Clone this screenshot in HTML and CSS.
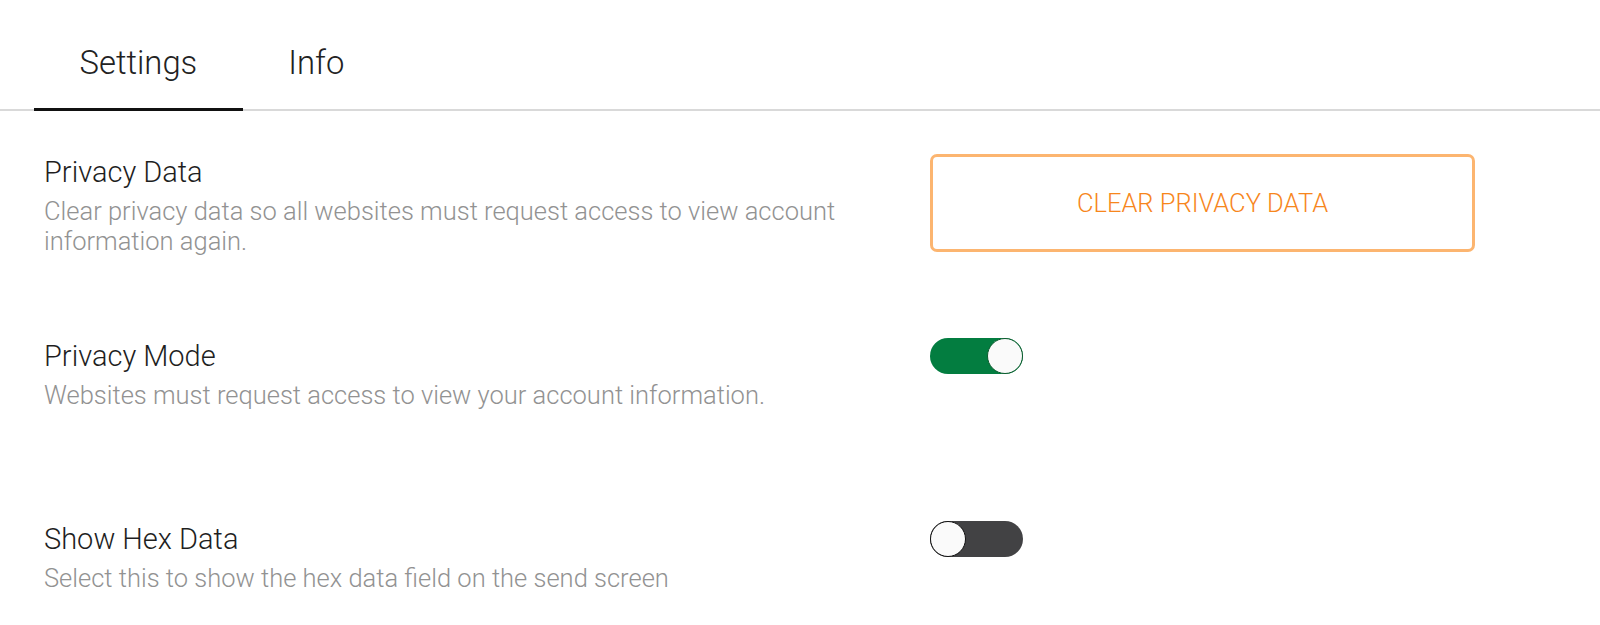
FILE: index.html
```html
<!DOCTYPE html>
<html lang="en">
<head>
<meta charset="utf-8">
<title>Settings</title>
<link rel="stylesheet" href="styles.css">
</head>
<body>
<div class="tabs">
  <div class="tab active">Settings</div>
  <div class="tab">Info</div>
</div>
<div class="settings">
  <div class="row">
    <div class="label">
      <div class="title">Privacy Data</div>
      <div class="desc">Clear privacy data so all websites must request access to view account information again.</div>
    </div>
    <div class="control">
      <button class="btn-clear">CLEAR PRIVACY DATA</button>
    </div>
  </div>
  <div class="row">
    <div class="label">
      <div class="title">Privacy Mode</div>
      <div class="desc">Websites must request access to view your account information.</div>
    </div>
    <div class="control">
      <div class="toggle on"><span class="knob"></span></div>
    </div>
  </div>
  <div class="row">
    <div class="label">
      <div class="title">Show Hex Data</div>
      <div class="desc">Select this to show the hex data field on the send screen</div>
    </div>
    <div class="control">
      <div class="toggle off"><span class="knob"></span></div>
    </div>
  </div>
</div>
</body>
</html>
```
FILE: styles.css
```css
html, body {
  margin: 0;
  padding: 0;
  background: #fff;
}
body {
  font-family: Roboto, "Liberation Sans", sans-serif;
  color: #222;
  overflow: hidden;
}
.tabs {
  display: flex;
  padding: 43px 0 0 34px;
  border-bottom: 2px solid #d9d9d9;
}
.tab {
  font-size: 32.8px;
  font-weight: 300;
  line-height: 40px;
  color: #222;
  padding: 0 45.5px 25px;
}
.tab.active {
  border-bottom: 3px solid #111;
  margin-bottom: -2px;
}
.settings {
  padding-top: 43px;
  display: flex;
  flex-direction: column;
}
.row {
  display: flex;
  align-items: flex-start;
  min-height: 183.5px;
}
.row:last-child {
  min-height: 0;
}
.label {
  flex: 0 0 auto;
  width: 825px;
  padding: 0 60px 0 44px;
}
.title {
  font-size: 29px;
  font-weight: 300;
  line-height: 36px;
  color: #1f1f1f;
}
.desc {
  margin-top: 6px;
  font-size: 25.5px;
  font-weight: 300;
  line-height: 30px;
  color: #929292;
}
.control {
  flex: 0 0 545px;
  display: flex;
  padding-left: 1px;
}
.btn-clear {
  width: 545px;
  height: 98px;
  box-sizing: border-box;
  border: 3px solid #fcb570;
  border-radius: 7px;
  background: #fff;
  color: #f7861c;
  font-family: Roboto, "Liberation Sans", sans-serif;
  font-size: 25.5px;
  font-weight: 300;
  padding: 0;
}
.toggle {
  position: relative;
  width: 93px;
  height: 36px;
  border-radius: 18px;
}
.toggle.on {
  background: #037d40;
}
.toggle.off {
  background: #424244;
}
.knob {
  position: absolute;
  top: 0;
  width: 36px;
  height: 36px;
  box-sizing: border-box;
  border-radius: 50%;
  background: #fafafa;
}
.toggle.on .knob {
  right: 0;
  border: 1.5px solid #0a5a2c;
}
.toggle.off .knob {
  left: 0;
  border: 1.5px solid #111;
}
```
